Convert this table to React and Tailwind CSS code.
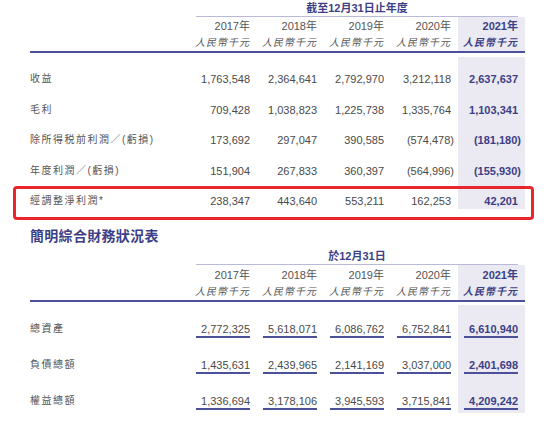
import React from "react";

const years = ["2017年", "2018年", "2019年", "2020年", "2021年"];

const incomeRows = [
  { label: "收益", values: ["1,763,548", "2,364,641", "2,792,970", "3,212,118", "2,637,637"] },
  { label: "毛利", values: ["709,428", "1,038,823", "1,225,738", "1,335,764", "1,103,341"] },
  { label: "除所得税前利潤／(虧損)", values: ["173,692", "297,047", "390,585", "(574,478)", "(181,180)"] },
  { label: "年度利潤／(虧損)", values: ["151,904", "267,833", "360,397", "(564,996)", "(155,930)"] },
  { label: "經調整淨利潤*", values: ["238,347", "443,640", "553,211", "162,253", "42,201"], flagged: true },
];

const positionRows = [
  { label: "總資產", values: ["2,772,325", "5,618,071", "6,086,762", "6,752,841", "6,610,940"] },
  { label: "負債總額", values: ["1,435,631", "2,439,965", "2,141,169", "3,037,000", "2,401,698"] },
  { label: "權益總額", values: ["1,336,694", "3,178,106", "3,945,593", "3,715,841", "4,209,242"] },
];

// negative figures keep the closing bracket hanging past the digits
function Amount({ v }) {
  if (v.startsWith("(")) {
    return (
      <>
        {v.slice(0, -1)}
        <span className="mr-[-3px]">)</span>
      </>
    );
  }
  return v;
}

function TableHeader({ title, yearPad }) {
  return (
    <>
      <div className="flex">
        <div className="w-[160px] shrink-0" />
        <div className="ml-[6px] w-[322px] border-b border-[#b9bad8] text-center text-[11px] font-bold leading-[16px] text-[#3d3f86]">
          {title}
        </div>
      </div>
      <div className="flex border-b-2 border-[#4b5199]">
        <div className="w-[160px] shrink-0" />
        {years.map((y, i) => (
          <div
            key={y}
            className={`w-[67px] shrink-0 pr-[7px] pb-[1px] text-right ${yearPad} ${
              i === 4 ? "bg-[#ebeaf3] font-bold text-[#3d3f86]" : "text-[#555]"
            }`}
          >
            <div className="text-[11px] leading-[14px]">{y}</div>
            <div className="mt-[3px] text-[10px] italic leading-[14px] tracking-[1px]">人民幣千元</div>
          </div>
        ))}
      </div>
    </>
  );
}

export default function App() {
  return (
    <div className="h-[421px] w-[550px] overflow-hidden bg-white pl-[30px] font-['Liberation_Sans','Noto_Sans_CJK_TC',sans-serif]">
      <div className="w-[495px]">
        {/* income summary */}
        <TableHeader title="截至12月31日止年度" yearPad="pt-[2px]" />
        <div className="pt-[3.5px]">
          {incomeRows.map((r) => (
            <div key={r.label} className="relative flex h-[30.5px] items-end">
              <div className="w-[160px] shrink-0 pb-[1px] text-[10px] leading-[14px] tracking-[1.5px] text-[#555]">
                {r.label}
              </div>
              {r.values.map((v, i) => (
                <div
                  key={i}
                  className={`flex h-full w-[67px] shrink-0 items-end justify-end pr-[7px] pb-[1px] text-[11px] leading-[14px] ${
                    i === 4 ? "bg-[#ebeaf3] font-bold text-[#3d3f86]" : "text-[#4a4a4a]"
                  }`}
                >
                  <span>
                    <Amount v={v} />
                  </span>
                </div>
              ))}
              {r.flagged && (
                <div className="pointer-events-none absolute top-[7.5px] right-[-9px] bottom-[-11px] left-[-17px] rounded-[4px] border-[3px] border-[#e8262b]" />
              )}
            </div>
          ))}
        </div>

        <div className="mt-[17px] mb-[2px] text-[14px] font-bold leading-[20px] tracking-[0.3px] text-[#3d3f86]">
          簡明綜合財務狀況表
        </div>

        {/* financial position */}
        <TableHeader title="於12月31日" yearPad="pt-[3px]" />
        <div className="pt-[3px]">
          {positionRows.map((r) => (
            <div key={r.label} className="flex h-[36px] items-end">
              <div className="w-[160px] shrink-0 pb-[5px] text-[10px] leading-[14px] tracking-[1.5px] text-[#555]">
                {r.label}
              </div>
              {r.values.map((v, i) => (
                <div
                  key={i}
                  className={`flex h-full w-[67px] shrink-0 flex-col justify-end pr-[7px] pl-[6px] pb-[3px] text-right text-[11px] leading-[14px] ${
                    i === 4 ? "bg-[#ebeaf3] font-bold text-[#3d3f86]" : "text-[#4a4a4a]"
                  }`}
                >
                  <div>{v}</div>
                  <div className="h-[2px] bg-[#4b5199]" />
                </div>
              ))}
            </div>
          ))}
        </div>
      </div>
    </div>
  );
}
